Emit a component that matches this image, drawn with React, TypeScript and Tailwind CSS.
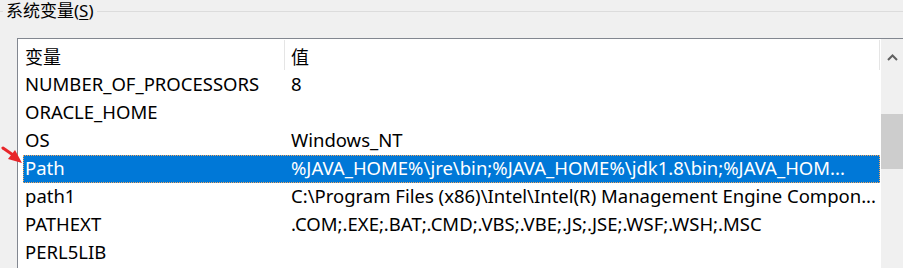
const rows = [
  { name: "NUMBER_OF_PROCESSORS", value: "8" },
  { name: "ORACLE_HOME", value: "" },
  { name: "OS", value: "Windows_NT" },
  {
    name: "Path",
    value: "%JAVA_HOME%\\jre\\bin;%JAVA_HOME%\\jdk1.8\\bin;%JAVA_HOM...",
    selected: true,
  },
  {
    name: "path1",
    value: "C:\\Program Files (x86)\\Intel\\Intel(R) Management Engine Compon...",
  },
  { name: "PATHEXT", value: ".COM;.EXE;.BAT;.CMD;.VBS;.VBE;.JS;.JSE;.WSF;.WSH;.MSC" },
  { name: "PERL5LIB", value: "" },
];

const font = "font-['Noto_Sans','Noto_Sans_CJK_SC',sans-serif]";

const App = () => {
  return (
    <div
      className={`relative w-[903px] h-[268px] overflow-hidden bg-[#f0f0f0] text-black ${font}`}
    >
      {/* group box title */}
      <div className="flex items-center h-[22px] text-[17px]">
        <div className="w-[3px] h-px bg-[#dcdcdc]" />
        <span className="px-[3px] leading-[22px] whitespace-nowrap">
          系统变量(<span className="underline underline-offset-2">S</span>)
        </span>
        <div className="flex-1 h-px bg-[#dcdcdc]" />
      </div>

      {/* list box */}
      <div className="ml-[17px] mt-[16px] h-[230px] flex border-t border-l border-[#828790] bg-white text-[18.5px]">
        <div className="flex-1 min-w-0 flex flex-col">
          {/* header */}
          <div className="flex h-[32px] items-center text-[18px]">
            <div className="w-[266px] pl-[7px] pt-[4px]">变量</div>
            <div className="w-px h-[30px] self-start mt-px bg-[#e5e5e5]" />
            <div className="flex-1 pl-[6px] pt-[4px]">值</div>
            <div className="w-px h-[30px] self-start mt-px bg-[#e5e5e5] mr-px" />
          </div>
          {/* rows */}
          {rows.map((r) => (
            <div key={r.name} className="h-[28px] pl-[5px] pr-[1px]">
              <div
                className={
                  r.selected
                    ? "flex h-full items-center pb-[2px] bg-[#0078d7] text-white border border-dotted border-[#f3a55c]"
                    : "flex h-full items-center pb-[2px] border border-transparent"
                }
              >
                <div className="w-[261px] pl-px whitespace-nowrap">{r.name}</div>
                <div className="flex-1 min-w-0 pl-[6px] whitespace-nowrap overflow-hidden">
                  {r.value}
                </div>
              </div>
            </div>
          ))}
        </div>

        {/* scrollbar */}
        <div className="w-[22px] flex flex-col bg-[#f0f0f0]">
          <div className="h-[36px] flex items-center justify-center">
            <svg width="11" height="7" viewBox="0 0 11 7">
              <path d="M1 6 L5.5 1.5 L10 6" fill="none" stroke="#606060" strokeWidth="2" />
            </svg>
          </div>
          <div className="mt-[39px] h-[55px] bg-[#cdcdcd]" />
        </div>
      </div>

      {/* red annotation arrow */}
      <svg
        className="absolute left-0 top-[144px]"
        width="26"
        height="22"
        viewBox="0 0 26 22"
      >
        <path d="M3 4 L13 11" stroke="#e8262a" strokeWidth="3" strokeLinecap="round" />
        <path d="M22 19 L8 15 L15 6 Z" fill="#e8262a" />
      </svg>
    </div>
  );
};

export default App;
